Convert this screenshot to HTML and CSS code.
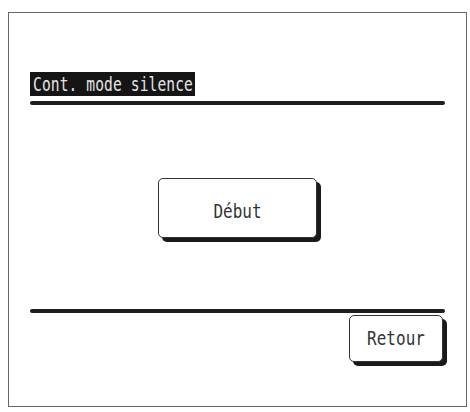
FILE: index.html
```html
<!DOCTYPE html>
<html>
<head>
<meta charset="utf-8">
<link rel="stylesheet" href="styles.css">
</head>
<body>
<div class="frame">
  <div class="title"><span class="title-box"><span class="title-text">Cont. mode silence</span></span></div>
  <div class="rule"></div>
  <div class="middle">
    <div class="btn btn-start"><span class="label label-start">Début</span></div>
  </div>
  <div class="rule"></div>
  <div class="footer">
    <div class="btn btn-back"><span class="label">Retour</span></div>
  </div>
</div>
</body>
</html>
```
FILE: styles.css
```css
html, body {
  margin: 0;
  padding: 0;
  background: #fff;
}
body {
  font-family: "DejaVu Sans Mono", "Liberation Mono", monospace;
}
.frame {
  margin: 12px 0 0 8px;
  width: 415px;
  height: 393px;
  border: 1px solid #666;
  padding: 0 21px 0 21px;
  box-sizing: content-box;
}
.title {
  margin-top: 59px;
  height: 24px;
}
.title-box {
  display: inline-block;
  background: #151515;
  height: 24px;
  line-height: 24px;
  padding: 0 2px 0 3px;
}
.title-text {
  display: inline-block;
  color: #e4e4e4;
  font-size: 14.6px;
  letter-spacing: 0.1px;
  transform: scaleY(1.3);
}
.rule {
  height: 4px;
  background: #1e1e1e;
  border-radius: 2px;
  margin-top: 5px;
}
.middle {
  padding: 73px 0 66px 128px;
}
.btn {
  box-sizing: border-box;
  border: 1.5px solid #333;
  border-radius: 5px;
  background: #fff;
  box-shadow: 4px 4px 0 #1a1a1a;
  display: flex;
  align-items: center;
  justify-content: center;
  color: #333;
  font-size: 16px;
}
.label {
  display: inline-block;
  transform: scaleY(1.25);
}
.label-start {
  margin-top: 6px;
}
.btn-start {
  width: 159px;
  height: 60px;
}
.footer {
  display: flex;
  justify-content: flex-end;
  padding: 2px 2px 0 0;
}
.btn-back {
  width: 94px;
  height: 47px;
}
```
